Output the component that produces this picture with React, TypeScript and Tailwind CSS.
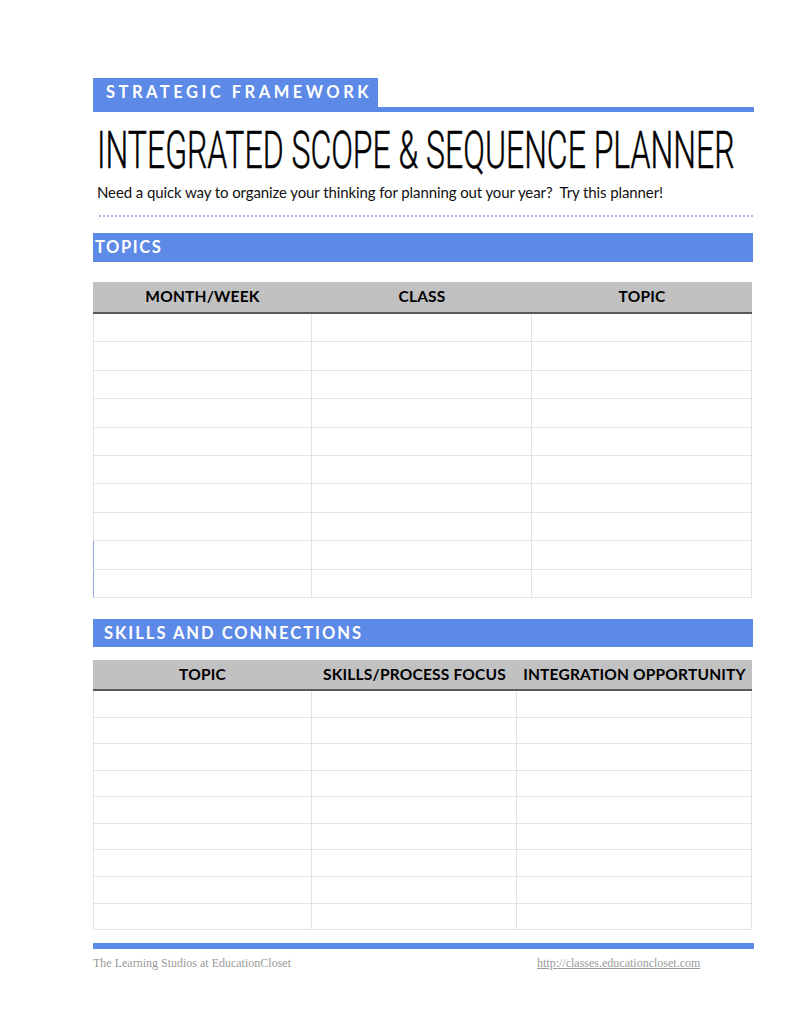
import React from "react";

const BLUE = "bg-[#5d8ae6]";

function Table({
  headers,
  cols,
  rows,
  rowH,
  headH,
  blueRows,
}: {
  headers: string[];
  cols: string;
  rows: number;
  rowH: string;
  headH: string;
  blueRows?: number[];
}) {
  return (
    <div className="w-[659px]">
      <div
        className={`grid ${cols} ${headH} bg-[#c1c1c1] border-b-2 border-[#5a5a5a] items-center`}
      >
        {headers.map((h) => (
          <div
            key={h}
            className="text-center text-[15.5px] font-bold text-black tracking-[0.2px] font-['Lato','Noto_Sans',sans-serif]"
          >
            {h}
          </div>
        ))}
      </div>
      {Array.from({ length: rows }).map((_, i) => (
        <div
          key={i}
          className={`grid ${cols} ${rowH} border-b border-[#e3e3e3]`}
        >
          {headers.map((h, j) => (
            <div
              key={h}
              className={
                j === 0
                  ? blueRows && blueRows.includes(i)
                    ? "border-l border-l-[#8fa9e0] border-r border-r-[#e3e3e3]"
                    : "border-l border-r border-[#e3e3e3]"
                  : "border-r border-[#e3e3e3]"
              }
            />
          ))}
        </div>
      ))}
    </div>
  );
}

export default function App() {
  return (
    <div className="min-h-[1024px] w-[791px] overflow-hidden bg-white font-['Lato','Noto_Sans',sans-serif]">
      <div className="ml-[93px] w-[660px] pt-[78px]">
        {/* Strategic framework tab */}
        <div className={`w-[285px] h-[29px] ${BLUE} flex items-center pl-[13px]`}>
          <span className="text-white text-[16.5px] font-bold tracking-[3.5px] leading-none whitespace-nowrap">
            STRATEGIC FRAMEWORK
          </span>
        </div>
        <div className={`h-[5px] w-[661px] ${BLUE}`} />

        {/* Title */}
        <div className="mt-[13px] ml-[4px] h-[50px] whitespace-nowrap">
          <span className="inline-block origin-top-left scale-y-[1.59] text-[32px] leading-[32px] font-[350] text-black font-['Roboto',sans-serif] [-webkit-text-stroke:0.3px_#000]">
            INTEGRATED SCOPE &amp; SEQUENCE PLANNER
          </span>
        </div>

        {/* Subtitle */}
        <p className="mt-[8px] ml-[4px] text-[15px] leading-[18px] text-[#111] tracking-[-0.1px] whitespace-nowrap">
          Need a quick way to organize your thinking for planning out your year?&nbsp; Try this planner!
        </p>

        <div className="mt-[14px] ml-[6px] w-[654px] border-b-2 border-dotted border-[#a9bbe2]" />

        {/* Topics */}
        <div className={`mt-[16px] h-[29px] ${BLUE} pl-[2px] pt-[2px]`}>
          <span className="text-white text-[16.5px] font-bold tracking-[1.6px] leading-[20px]">
            TOPICS
          </span>
        </div>

        <div className="mt-[20px]">
          <Table
            headers={["MONTH/WEEK", "CLASS", "TOPIC"]}
            cols="grid-cols-[219px_220px_220px]"
            rows={10}
            rowH="h-[28.4px]"
            headH="h-[32px]"
            blueRows={[8, 9]}
          />
        </div>

        {/* Skills */}
        <div className={`mt-[21px] h-[28px] ${BLUE} pl-[11px] flex items-center`}>
          <span className="text-white text-[16.5px] font-bold tracking-[2px] leading-none whitespace-nowrap">
            SKILLS AND CONNECTIONS
          </span>
        </div>

        <div className="mt-[13px]">
          <Table
            headers={["TOPIC", "SKILLS/PROCESS FOCUS", "INTEGRATION OPPORTUNITY"]}
            cols="grid-cols-[219px_205px_235px]"
            rows={9}
            rowH="h-[26.6px]"
            headH="h-[31px]"
          />
        </div>

        {/* Footer */}
        <div className={`mt-[13px] h-[6px] w-[661px] ${BLUE}`} />
        <div className="mt-[7px] flex font-['Liberation_Serif',serif] text-[12px] text-[#9a9a9a] leading-[14px]">
          <span className="w-[444px]">The Learning Studios at EducationCloset</span>
          <span className="underline">http://classes.educationcloset.com</span>
        </div>
      </div>
    </div>
  );
}
